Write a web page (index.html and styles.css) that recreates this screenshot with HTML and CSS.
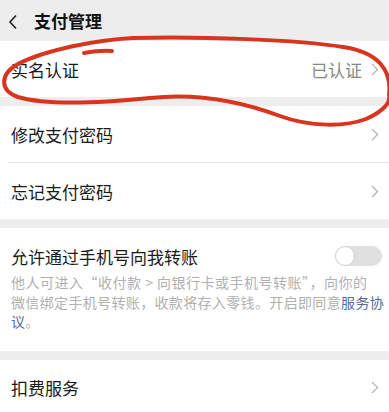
FILE: index.html
```html
<!DOCTYPE html>
<html lang="zh-CN">
<head>
    <meta charset="UTF-8">
    <meta name="viewport" content="width=device-width, initial-scale=1.0">
    <title>支付管理</title>
    <link rel="stylesheet" href="styles.css">
</head>
<body>
    <div class="page">
        <div class="topbar">
            <svg class="back" width="10" height="16" viewBox="0 0 10 16">
                <path d="M8 1.5 L2 8 L8 14.5" fill="none" stroke="#222" stroke-width="1.6"/>
            </svg>
            <span class="title">支付管理</span>
        </div>

        <div class="card first">
            <div class="row">
                <span class="label">实名认证</span>
                <span class="value">已认证</span>
                <svg class="arrow" width="8" height="13" viewBox="0 0 8 13"><path d="M1 1 L6.5 6.5 L1 12" fill="none" stroke="#b5b5b5" stroke-width="1.3"/></svg>
            </div>
        </div>

        <div class="card">
            <div class="row">
                <span class="label">修改支付密码</span>
                <svg class="arrow" width="8" height="13" viewBox="0 0 8 13"><path d="M1 1 L6.5 6.5 L1 12" fill="none" stroke="#b5b5b5" stroke-width="1.3"/></svg>
            </div>
            <div class="divider"></div>
            <div class="row">
                <span class="label">忘记支付密码</span>
                <svg class="arrow" width="8" height="13" viewBox="0 0 8 13"><path d="M1 1 L6.5 6.5 L1 12" fill="none" stroke="#b5b5b5" stroke-width="1.3"/></svg>
            </div>
        </div>

        <div class="card switch-card">
            <div class="switch-row">
                <span class="label">允许通过手机号向我转账</span>
                <div class="toggle"><div class="knob"></div></div>
            </div>
            <p class="desc"><span class="first-line">他人可进入“收付款 &gt; 向银行卡或手机号转账”，向你的</span><br>微信绑定手机号转账，收款将存入零钱。开启即同意<span class="link">服务协议</span>。</p>
        </div>

        <div class="card last">
            <div class="row">
                <span class="label">扣费服务</span>
                <svg class="arrow" width="8" height="13" viewBox="0 0 8 13"><path d="M1 1 L6.5 6.5 L1 12" fill="none" stroke="#b5b5b5" stroke-width="1.3"/></svg>
            </div>
        </div>
    </div>

    <!-- hand-drawn red circle around 实名认证 -->
    <svg class="scribble" width="389" height="412" viewBox="0 0 389 412">
        <path d="M84 53 C 95 51, 104 50, 112 51" />
        <path d="M389 95 C 392 70, 378 52, 343 47 C 300 40, 200 36, 133 38 C 95 40, 45 50, 18 64 C 0 74, -1 90, 18 97 C 48 106, 100 103, 150 98 C 195 93, 240 101, 280 116 C 310 127, 345 127, 366 119 C 384 111, 391 102, 389 95" />
    </svg>
</body>
</html>
```

FILE: styles.css
```css
body {
    margin: 0;
    background-color: #ededed;
    font-family: "Noto Sans CJK SC", "Noto Sans", sans-serif;
    color: #1a1a1a;
    overflow: hidden;
}
.page {
    width: 389px;
    height: 412px;
}
.topbar {
    height: 41px;
    display: flex;
    align-items: center;
    padding-left: 8px;
    background-color: #ededed;
}
.back {
    margin-right: 16px;
    margin-top: 2px;
}
.title {
    font-size: 17px;
    font-weight: bold;
    color: #111;
}
.card {
    background-color: #fff;
    margin-top: 9px;
}
.card.first {
    margin-top: 0;
}
.row {
    height: 56px;
    display: flex;
    align-items: center;
    padding: 0 11px;
}
.label {
    font-size: 17px;
    flex: 1;
}
.value {
    font-size: 17px;
    color: #888;
    margin-right: 9px;
}
.arrow {
    margin-right: -1px;
}
.divider {
    height: 1px;
    background-color: #e6e6e6;
    margin-left: 8px;
}
.switch-card {
    padding: 16px 2px 19px 11px;
}
.switch-row {
    display: flex;
    align-items: center;
    height: 24px;
    margin-right: 9px;
}
.toggle {
    width: 47px;
    height: 20px;
    border-radius: 10px;
    background-color: #e0e0e0;
    position: relative;
    margin-right: -4px;
}
.knob {
    width: 18px;
    height: 18px;
    border-radius: 50%;
    background-color: #fff;
    border: 1px solid #d2d2d2;
    position: absolute;
    top: 0;
    left: 0;
}
.desc {
    margin: 5px 0 0;
    font-size: 14px;
    line-height: 19.5px;
    letter-spacing: 0.35px;
    color: #b0b0b0;
}
.first-line {
    letter-spacing: 0.5px;
}
.link {
    color: #576b95;
}
.scribble {
    position: absolute;
    top: 0;
    left: 0;
    pointer-events: none;
}
.scribble path {
    fill: none;
    stroke: #d8351f;
    stroke-width: 4;
    stroke-linecap: round;
}
```
